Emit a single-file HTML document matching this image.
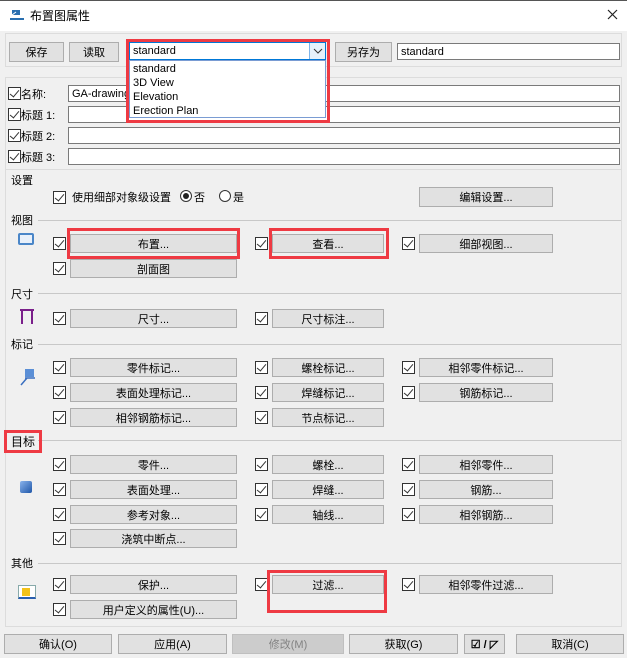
<!DOCTYPE html>
<html><head><meta charset="utf-8"><style>
*{box-sizing:border-box;margin:0;padding:0}
body{width:627px;height:658px;background:#f0f0f0;font-family:"Liberation Sans","Noto Sans CJK SC",sans-serif;font-size:11px;color:#000;position:relative;overflow:hidden}
.a{position:absolute}
.b{position:absolute;background:#e1e1e1;border:1px solid #adadad;font-size:11px;height:19px;display:flex;align-items:center;justify-content:center}
.cb{position:absolute;width:13px;height:13px;border:1px solid #333;background:#fff}
.cb::after{content:"";position:absolute;left:3px;top:0px;width:4px;height:8px;border:solid #333;border-width:0 1.5px 1.5px 0;transform:rotate(40deg)}
.in{position:absolute;background:#fff;border:1px solid #7a7a7a;height:17px;font-size:11px;padding-left:3px;display:flex;align-items:center}
.lbl{position:absolute;font-size:11px}
.hl{position:absolute;height:1px;background:#c8c8c8;left:38px;width:583px}
.red{position:absolute;border:3px solid #ee3a43;z-index:6}
</style></head><body>
<div class="a" style="left:0;top:0;width:627px;height:31px;background:#fff"></div>
<div class="a" style="left:0;top:0;width:627px;height:1px;background:#555"></div>
<svg class="a" style="left:9px;top:8px" width="16" height="14"><rect x="3" y="2" width="8" height="5" fill="#2a6fb0"/><rect x="1" y="10" width="14" height="2" fill="#2a6fb0"/><path d="M3 7 L7 4" stroke="#fff"/></svg>
<div class="a" style="left:30px;top:7px;font-size:12px">布置图属性</div>
<svg class="a" style="left:607px;top:9px" width="11" height="11"><path d="M1 1L10 10M10 1L1 10" stroke="#222" stroke-width="1.2"/></svg>

<div class="a" style="left:5px;top:33px;width:617px;height:34px;border:1px solid #dcdcdc"></div>
<div class="b" style="left:9px;top:42px;width:55px;height:20px">保存</div>
<div class="b" style="left:69px;top:42px;width:50px;height:20px">读取</div>
<div class="in" style="left:129px;top:42px;width:197px;height:18px;border-color:#0078d7;z-index:5">standard</div>
<div class="a" style="left:309px;top:43px;width:16px;height:16px;background:#e5f1fb;border-left:1px solid #7eb4ea;z-index:5"><svg width="16" height="16"><path d="M4 6L8 10L12 6" stroke="#333" fill="none"/></svg></div>
<div class="a" style="left:129px;top:60px;width:197px;height:58px;background:#fff;border:1px solid #7a9cd3;padding:1px 0 0 3px;line-height:14px;font-size:11px;z-index:5">standard<br>3D View<br>Elevation<br>Erection Plan</div>
<div class="red" style="left:126px;top:39px;width:204px;height:84px"></div>
<div class="b" style="left:335px;top:42px;width:57px;height:20px">另存为</div>
<div class="in" style="left:397px;top:43px;width:223px">standard</div>

<div class="a" style="left:5px;top:77px;width:617px;height:550px;border:1px solid #dcdcdc"></div>
<div class="cb" style="left:8px;top:87px"></div><div class="lbl" style="left:21px;top:86px">名称:</div>
<div class="in" style="left:68px;top:85px;width:552px">GA-drawing</div>
<div class="cb" style="left:8px;top:108px"></div><div class="lbl" style="left:21px;top:107px">标题 1:</div>
<div class="in" style="left:68px;top:106px;width:552px"></div>
<div class="cb" style="left:8px;top:129px"></div><div class="lbl" style="left:21px;top:128px">标题 2:</div>
<div class="in" style="left:68px;top:127px;width:552px"></div>
<div class="cb" style="left:8px;top:150px"></div><div class="lbl" style="left:21px;top:149px">标题 3:</div>
<div class="in" style="left:68px;top:148px;width:552px"></div>

<div class="a" style="left:5px;top:169px;width:617px;height:1px;background:#dcdcdc"></div>
<div class="lbl" style="left:11px;top:172px">设置</div>
<div class="cb" style="left:53px;top:191px"></div>
<div class="lbl" style="left:72px;top:189px">使用细部对象级设置</div>
<div class="a" style="left:180px;top:190px;width:12px;height:12px;border:1px solid #333;border-radius:50%;background:#fff"><div class="a" style="left:2px;top:2px;width:6px;height:6px;border-radius:50%;background:#222"></div></div>
<div class="lbl" style="left:194px;top:189px">否</div>
<div class="a" style="left:219px;top:190px;width:12px;height:12px;border:1px solid #333;border-radius:50%;background:#fff"></div>
<div class="lbl" style="left:233px;top:189px">是</div>
<div class="b" style="left:419px;top:187px;width:134px;height:20px">编辑设置...</div>

<div class="lbl" style="left:11px;top:212px">视图</div><div class="hl" style="top:220px"></div>
<div class="a" style="left:18px;top:233px;width:16px;height:12px;border:2px solid #4a86c8;border-radius:2px;background:#e8f0fa"></div>
<div class="cb" style="left:53px;top:237px"></div><div class="b" style="left:70px;top:234px;width:167px">布置...</div>
<div class="cb" style="left:255px;top:237px"></div><div class="b" style="left:272px;top:234px;width:112px">查看...</div>
<div class="cb" style="left:402px;top:237px"></div><div class="b" style="left:419px;top:234px;width:134px">细部视图...</div>
<div class="cb" style="left:53px;top:262px"></div><div class="b" style="left:70px;top:259px;width:167px">剖面图</div>
<div class="red" style="left:67px;top:228px;width:173px;height:31px"></div>
<div class="red" style="left:269px;top:228px;width:120px;height:31px"></div>

<div class="lbl" style="left:11px;top:286px">尺寸</div><div class="hl" style="top:293px"></div>
<svg class="a" style="left:18px;top:308px" width="18" height="17"><path d="M2 2H16M4 2V16M14 2V16" stroke="#7a1f8a" stroke-width="2" fill="none"/></svg>
<div class="cb" style="left:53px;top:312px"></div><div class="b" style="left:70px;top:309px;width:167px">尺寸...</div>
<div class="cb" style="left:255px;top:312px"></div><div class="b" style="left:272px;top:309px;width:112px">尺寸标注...</div>

<div class="lbl" style="left:11px;top:336px">标记</div><div class="hl" style="top:344px"></div>
<svg class="a" style="left:18px;top:368px" width="18" height="18"><rect x="7" y="1" width="9" height="8" fill="#5b8fd6"/><path d="M3 17L9 10M7 10H17" stroke="#3a6fc0" stroke-width="1.5"/></svg>
<div class="cb" style="left:53px;top:361px"></div><div class="b" style="left:70px;top:358px;width:167px">零件标记...</div>
<div class="cb" style="left:255px;top:361px"></div><div class="b" style="left:272px;top:358px;width:112px">螺栓标记...</div>
<div class="cb" style="left:402px;top:361px"></div><div class="b" style="left:419px;top:358px;width:134px">相邻零件标记...</div>
<div class="cb" style="left:53px;top:386px"></div><div class="b" style="left:70px;top:383px;width:167px">表面处理标记...</div>
<div class="cb" style="left:255px;top:386px"></div><div class="b" style="left:272px;top:383px;width:112px">焊缝标记...</div>
<div class="cb" style="left:402px;top:386px"></div><div class="b" style="left:419px;top:383px;width:134px">钢筋标记...</div>
<div class="cb" style="left:53px;top:411px"></div><div class="b" style="left:70px;top:408px;width:167px">相邻钢筋标记...</div>
<div class="cb" style="left:255px;top:411px"></div><div class="b" style="left:272px;top:408px;width:112px">节点标记...</div>

<div class="lbl" style="left:11px;top:433px;font-size:12px">目标</div><div class="hl" style="top:440px"></div>
<div class="red" style="left:4px;top:430px;width:38px;height:23px"></div>
<div class="a" style="left:20px;top:481px;width:12px;height:12px;background:linear-gradient(135deg,#8ab4ec,#1f56a8);border-radius:2px"></div>
<div class="cb" style="left:53px;top:458px"></div><div class="b" style="left:70px;top:455px;width:167px">零件...</div>
<div class="cb" style="left:255px;top:458px"></div><div class="b" style="left:272px;top:455px;width:112px">螺栓...</div>
<div class="cb" style="left:402px;top:458px"></div><div class="b" style="left:419px;top:455px;width:134px">相邻零件...</div>
<div class="cb" style="left:53px;top:483px"></div><div class="b" style="left:70px;top:480px;width:167px">表面处理...</div>
<div class="cb" style="left:255px;top:483px"></div><div class="b" style="left:272px;top:480px;width:112px">焊缝...</div>
<div class="cb" style="left:402px;top:483px"></div><div class="b" style="left:419px;top:480px;width:134px">钢筋...</div>
<div class="cb" style="left:53px;top:508px"></div><div class="b" style="left:70px;top:505px;width:167px">参考对象...</div>
<div class="cb" style="left:255px;top:508px"></div><div class="b" style="left:272px;top:505px;width:112px">轴线...</div>
<div class="cb" style="left:402px;top:508px"></div><div class="b" style="left:419px;top:505px;width:134px">相邻钢筋...</div>
<div class="cb" style="left:53px;top:532px"></div><div class="b" style="left:70px;top:529px;width:167px">浇筑中断点...</div>

<div class="lbl" style="left:11px;top:555px">其他</div><div class="hl" style="top:563px"></div>
<div class="a" style="left:18px;top:585px;width:18px;height:14px;background:#fff;border:1px solid #8aa;border-bottom:2px solid #2a5fb0"><div class="a" style="left:3px;top:2px;width:8px;height:8px;background:#f3c21a"></div></div>
<div class="cb" style="left:53px;top:578px"></div><div class="b" style="left:70px;top:575px;width:167px">保护...</div>
<div class="cb" style="left:255px;top:578px"></div><div class="b" style="left:272px;top:575px;width:112px">过滤...</div>
<div class="cb" style="left:402px;top:578px"></div><div class="b" style="left:419px;top:575px;width:134px">相邻零件过滤...</div>
<div class="cb" style="left:53px;top:603px"></div><div class="b" style="left:70px;top:600px;width:167px">用户定义的属性(U)...</div>
<div class="red" style="left:267px;top:570px;width:120px;height:43px"></div>

<div class="b" style="left:4px;top:634px;width:108px;height:20px">确认(O)</div>
<div class="b" style="left:118px;top:634px;width:109px;height:20px">应用(A)</div>
<div class="b" style="left:232px;top:634px;width:112px;height:20px;background:#cccccc;border-color:#bfbfbf;color:#838383">修改(M)</div>
<div class="b" style="left:349px;top:634px;width:109px;height:20px">获取(G)</div>
<div class="b" style="left:464px;top:634px;width:41px;height:20px;font-weight:bold">☑ / ◸</div>
<div class="b" style="left:516px;top:634px;width:108px;height:20px">取消(C)</div>
</body></html>
